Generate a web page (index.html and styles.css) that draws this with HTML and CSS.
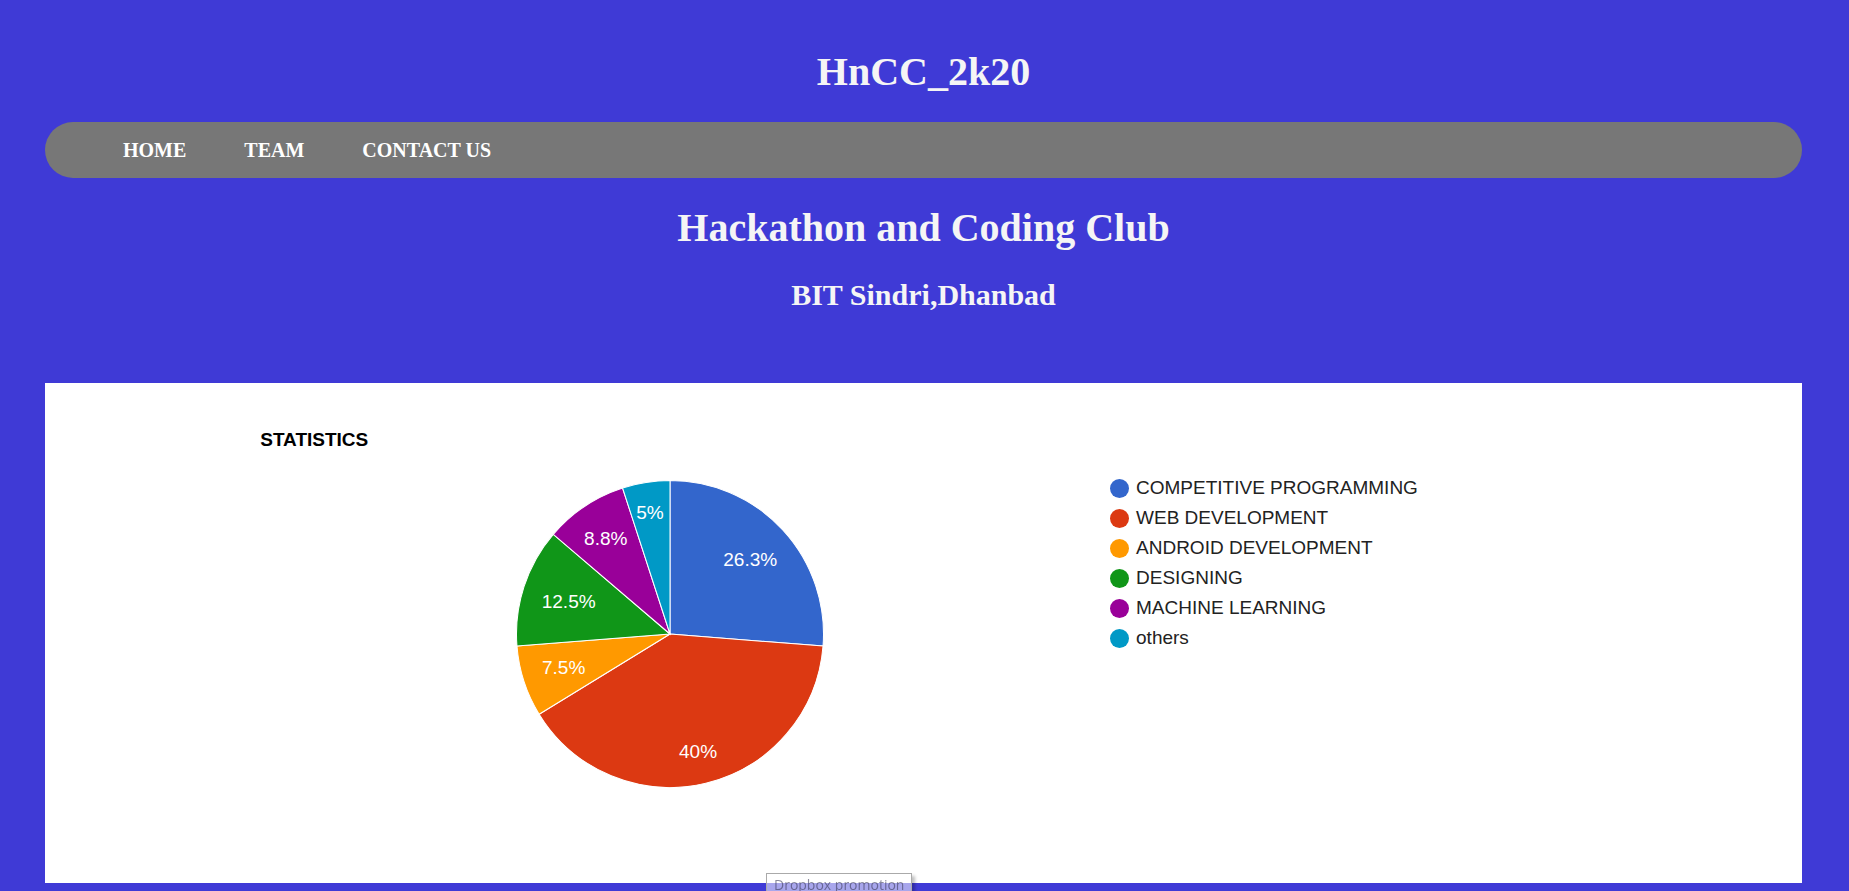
FILE: index.html
```html
<!DOCTYPE html>
<html lang="en">
<head>
<meta charset="utf-8">
<title>HnCC_2k20</title>
<link rel="stylesheet" href="styles.css">
</head>
<body>
<header class="header">
  <h1 class="title">HnCC_2k20</h1>
  <nav class="nav">
    <a class="nav-link" href="#home">HOME</a>
    <a class="nav-link" href="#team">TEAM</a>
    <a class="nav-link" href="#contact">CONTACT US</a>
  </nav>
  <h1 class="title">Hackathon and Coding Club</h1>
  <h2 class="subtitle">BIT Sindri,Dhanbad</h2>
</header>
<main class="chart">
  <h3 class="chart-title">STATISTICS</h3>
  <div class="chart-body">
    <svg class="pie" width="308" height="308" viewBox="-153.5 -153.5 307 307" role="img" aria-label="Statistics">
      <g stroke="#fff" stroke-width="1">
        <path fill="#3366cc" d="M0 0V-153A153 153 0 0 1 152.53 12Z"/>
        <path fill="#dc3912" d="M0 0L152.53 12A153 153 0 0 1 -130.45 79.94Z"/>
        <path fill="#ff9900" d="M0 0L-130.45 79.94A153 153 0 0 1 -152.53 12Z"/>
        <path fill="#109618" d="M0 0L-152.53 12A153 153 0 0 1 -116.34 -99.37Z"/>
        <path fill="#990099" d="M0 0L-116.34 -99.37A153 153 0 0 1 -47.28 -145.51Z"/>
        <path fill="#0099c6" d="M0 0L-47.28 -145.51A153 153 0 0 1 0 -153Z"/>
      </g>
      <g class="pie-labels">
        <text x="80" y="-68">26.3%</text>
        <text x="28" y="124">40%</text>
        <text x="-106" y="40">7.5%</text>
        <text x="-101" y="-26">12.5%</text>
        <text x="-64" y="-89">8.8%</text>
        <text x="-20" y="-115">5%</text>
      </g>
    </svg>
    <ul class="legend">
      <li class="legend-item"><span class="dot blue"></span>COMPETITIVE PROGRAMMING</li>
      <li class="legend-item"><span class="dot red"></span>WEB DEVELOPMENT</li>
      <li class="legend-item"><span class="dot orange"></span>ANDROID DEVELOPMENT</li>
      <li class="legend-item"><span class="dot green"></span>DESIGNING</li>
      <li class="legend-item"><span class="dot purple"></span>MACHINE LEARNING</li>
      <li class="legend-item"><span class="dot cyan"></span>others</li>
    </ul>
  </div>
</main>
<div class="tooltip" role="tooltip">Dropbox promotion</div>
</body>
</html>
```
FILE: styles.css
```css
* {
  box-sizing: border-box;
}

body {
  margin: 0;
  padding: 22px 47px 8px 45px;
  background: #3f3ad6;
  font-family: "Liberation Serif", "Times New Roman", serif;
}

.header {
  display: flex;
  flex-direction: column;
  padding-bottom: 71px;
  color: whitesmoke;
  text-align: center;
}

.title {
  margin: 27px 0;
  font-size: 40px;
  line-height: 46px;
}

.subtitle {
  margin: 0;
  font-size: 30px;
  line-height: 34px;
}

.nav {
  display: flex;
  align-items: center;
  gap: 58px;
  height: 56px;
  padding: 0 78px;
  border-radius: 28px;
  background: #777;
}

.nav-link {
  color: #fff;
  font-size: 20px;
  font-weight: bold;
  text-decoration: none;
}

.chart {
  min-height: 500px;
  padding: 46px 12.25% 95px;
  background: #fff;
  font-family: "Liberation Sans", Arial, sans-serif;
  font-size: 19px;
}

.chart-title {
  margin: 0 0 23px;
  color: #000;
  font-size: 19px;
  line-height: 21px;
}

.chart-body {
  display: grid;
  grid-template-columns: 61.8% 1fr;
  gap: 30px;
}

.pie {
  justify-self: center;
  margin-top: 7px;
}

.pie-labels {
  fill: #fff;
  font-size: 19px;
  text-anchor: middle;
}

.legend {
  margin: 0;
  padding: 0;
  color: #222;
  list-style: none;
}

.legend-item {
  display: flex;
  align-items: center;
  gap: 7px;
  line-height: 30px;
}

.dot {
  width: 19px;
  height: 19px;
  border-radius: 50%;
}

.blue { background: #3366cc; }
.red { background: #dc3912; }
.orange { background: #ff9900; }
.green { background: #109618; }
.purple { background: #990099; }
.cyan { background: #0099c6; }

.tooltip {
  position: fixed;
  bottom: -6px;
  left: 766px;
  padding: 0 7px;
  border: 1px solid #aaa;
  background: rgba(255, 255, 255, 0.55);
  box-shadow: 3px 3px 3px rgba(0, 0, 0, 0.25);
  color: rgba(60, 60, 90, 0.6);
  font-family: "Open Sans", "Noto Sans", sans-serif;
  font-size: 14px;
  line-height: 22px;
  white-space: nowrap;
}
```
